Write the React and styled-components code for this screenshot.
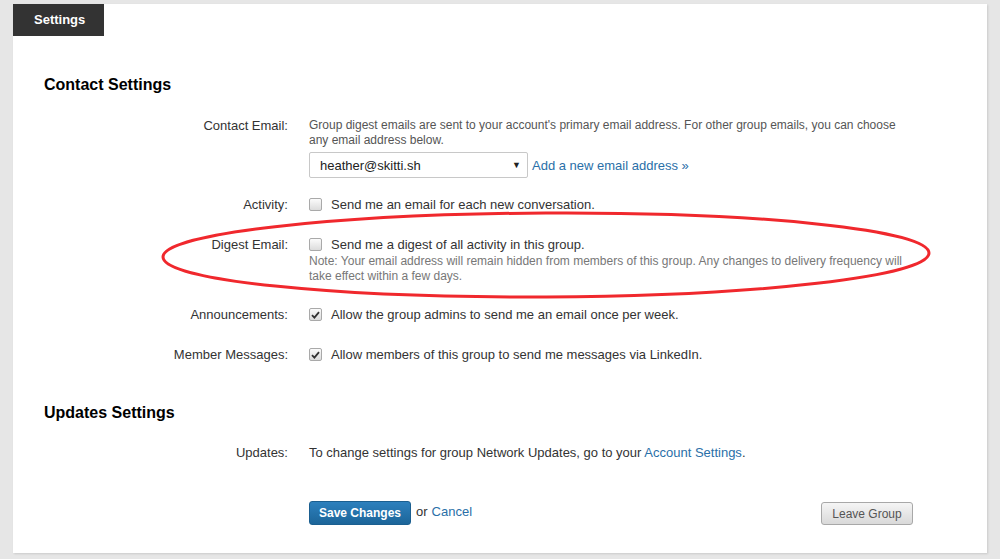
import React from "react";
import styled, { createGlobalStyle } from "styled-components";

const GlobalStyle = createGlobalStyle`
  html, body {
    margin: 0;
    padding: 0;
    background: #e6e6e6;
    font-family: "Liberation Sans", Arial, sans-serif;
    color: #333;
  }
`;

const Page = styled.div`
  padding: 4px 13px 6px 13px;
`;

const Panel = styled.div`
  position: relative;
  width: 974px;
  height: 549px;
  background: #fff;
  box-shadow: 1px 1px 2px rgba(0, 0, 0, 0.12);
`;

const Tab = styled.div`
  width: 70px;
  height: 32px;
  padding-left: 21px;
  background: #333;
  color: #fff;
  font-size: 13px;
  font-weight: bold;
  line-height: 32px;
`;

const Content = styled.div`
  padding: 0 74px 0 31px;
`;

const Heading = styled.h2`
  margin: ${(p) => p.$top}px 0 0 0;
  font-size: 16px;
  line-height: 20px;
  font-weight: bold;
  color: #000;
`;

const Row = styled.div`
  display: grid;
  grid-template-columns: 244px 1fr;
  column-gap: 21px;
  margin-top: ${(p) => p.$top}px;
  font-size: 13px;
  line-height: 15px;
`;

const Label = styled.div`
  text-align: right;
  color: #333;
`;

const Field = styled.div`
  display: flex;
  flex-direction: column;
`;

const Hint = styled.div`
  font-size: 12px;
  line-height: 15px;
  color: ${(p) => (p.$light ? "#777" : "#555")};
  margin-top: ${(p) => p.$top || 0}px;
  margin-right: ${(p) => p.$right}px;
`;

const SelectLine = styled.div`
  display: flex;
  align-items: center;
  gap: 4px;
  margin-top: 4px;
`;

const Select = styled.div`
  box-sizing: border-box;
  width: 219px;
  height: 26px;
  border: 1px solid #c8c8c8;
  border-radius: 2px;
  display: flex;
  align-items: center;
  justify-content: space-between;
  padding: 0 6px 0 10px;
  font-size: 13px;
  color: #222;
`;

const Arrow = styled.span`
  font-size: 9px;
  color: #222;
`;

const Link = styled.a`
  color: #2a6fa8;
  text-decoration: none;
  cursor: pointer;
`;

const CheckLine = styled.label`
  display: flex;
  align-items: center;
  gap: 9px;
  color: #333;
`;

const Box = styled.span`
  box-sizing: border-box;
  width: 13px;
  height: 13px;
  border: 1px solid #a9a9a9;
  border-radius: 2px;
  background: linear-gradient(#fbfbfb, #dcdcdc);
  display: flex;
  align-items: center;
  justify-content: center;
  flex: none;
`;

const Actions = styled.div`
  display: flex;
  align-items: center;
  margin-top: 41px;
  padding-left: 265px;
  font-size: 13px;
`;

const SaveButton = styled.button`
  box-sizing: border-box;
  height: 24px;
  width: 102px;
  border: 1px solid #1b5f90;
  border-radius: 3px;
  background: linear-gradient(#2d80bd, #1c6599);
  color: #fff;
  font-family: inherit;
  font-size: 12px;
  font-weight: bold;
  padding: 0;
  margin-right: 5px;
`;

const Or = styled.span`
  color: #333;
  margin-top: -4px;
`;

const CancelLink = styled(Link)`
  margin-left: 4px;
  margin-top: -4px;
`;

const LeaveButton = styled.button`
  box-sizing: border-box;
  margin-left: auto;
  margin-top: 1px;
  height: 23px;
  width: 92px;
  border: 1px solid #a8a8a8;
  border-radius: 3px;
  background: linear-gradient(#f5f5f5, #d9d9d9);
  color: #555;
  font-family: inherit;
  font-size: 12px;
  padding: 0;
`;

const Annotation = styled.svg`
  position: absolute;
  left: 0;
  top: 0;
  pointer-events: none;
`;

const Checkbox = ({ checked, children }) => (
  <CheckLine>
    <Box>
      {checked && (
        <svg width="9" height="8" viewBox="0 0 9 8">
          <path d="M1 4.2 L3.4 6.6 L8 1.2" fill="none" stroke="#333" strokeWidth="1.8" />
        </svg>
      )}
    </Box>
    {children}
  </CheckLine>
);

export default function App() {
  return (
    <>
      <GlobalStyle />
      <Page>
        <Panel>
          <Tab>Settings</Tab>
          <Content>
            <Heading $top={39}>Contact Settings</Heading>

            <Row $top={23}>
              <Label>Contact Email:</Label>
              <Field>
                <Hint $right={10}>
                  Group digest emails are sent to your account's primary email address. For other group emails, you can choose any email address below.
                </Hint>
                <SelectLine>
                  <Select>
                    heather@skitti.sh
                    <Arrow>▼</Arrow>
                  </Select>
                  <Link>Add a new email address »</Link>
                </SelectLine>
              </Field>
            </Row>

            <Row $top={19}>
              <Label>Activity:</Label>
              <Checkbox>Send me an email for each new conversation.</Checkbox>
            </Row>

            <Row $top={25}>
              <Label>Digest Email:</Label>
              <Field>
                <Checkbox>Send me a digest of all activity in this group.</Checkbox>
                <Hint $light $top={2} $right={-12}>
                  Note: Your email address will remain hidden from members of this group. Any changes to delivery frequency will take effect within a few days.
                </Hint>
              </Field>
            </Row>

            <Row $top={23}>
              <Label>Announcements:</Label>
              <Checkbox checked>Allow the group admins to send me an email once per week.</Checkbox>
            </Row>

            <Row $top={25}>
              <Label>Member Messages:</Label>
              <Checkbox checked>Allow members of this group to send me messages via LinkedIn.</Checkbox>
            </Row>

            <Heading $top={41}>Updates Settings</Heading>

            <Row $top={22}>
              <Label>Updates:</Label>
              <div>
                To change settings for group Network Updates, go to your <Link>Account Settings</Link>.
              </div>
            </Row>

            <Actions>
              <SaveButton>Save Changes</SaveButton>
              <Or>or</Or>
              <CancelLink>Cancel</CancelLink>
              <LeaveButton>Leave Group</LeaveButton>
            </Actions>
          </Content>

          <Annotation width="974" height="549">
            <ellipse
              cx="533"
              cy="251"
              rx="383"
              ry="42"
              fill="none"
              stroke="#f0282d"
              strokeWidth="3"
              transform="rotate(-0.3 533 251)"
            />
          </Annotation>
        </Panel>
      </Page>
    </>
  );
}
